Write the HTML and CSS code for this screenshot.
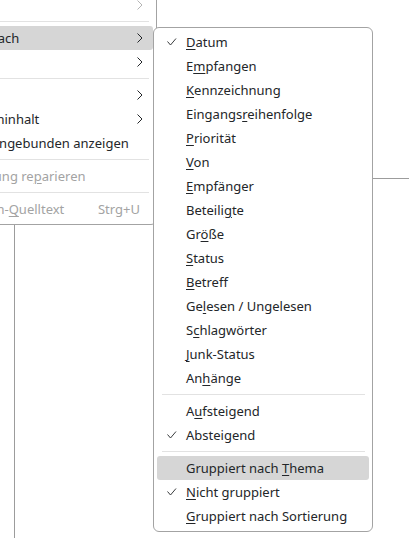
FILE: index.html
```html
<!DOCTYPE html>
<html lang="de">
<head>
<meta charset="UTF-8" />
<title>Ansicht</title>
<link rel="stylesheet" href="styles.css">
</head>
<body>

<div class="window">
  <div class="pane">
    <div class="pane-top"></div>
  </div>
</div>

<!-- Ansicht-Menü -->
<div class="menu menu-view">
  <div class="item disabled"><span class="label">Ordner</span><span class="arrow"><svg width="6" height="10" viewBox="0 0 6 10"><polyline points="0.5,0.5 5,5 0.5,9.5" /></svg></span></div>
  <div class="sep"></div>
  <div class="item active"><span class="label">Sortieren nach</span><span class="arrow"><svg width="6" height="10" viewBox="0 0 6 10"><polyline points="0.5,0.5 5,5 0.5,9.5" /></svg></span></div>
  <div class="item"><span class="label">Threads</span><span class="arrow"><svg width="6" height="10" viewBox="0 0 6 10"><polyline points="0.5,0.5 5,5 0.5,9.5" /></svg></span></div>
  <div class="sep"></div>
  <div class="item"><span class="label">Kopfzeilen</span><span class="arrow"><svg width="6" height="10" viewBox="0 0 6 10"><polyline points="0.5,0.5 5,5 0.5,9.5" /></svg></span></div>
  <div class="item"><span class="label">Nachrichteninhalt</span><span class="arrow"><svg width="6" height="10" viewBox="0 0 6 10"><polyline points="0.5,0.5 5,5 0.5,9.5" /></svg></span></div>
  <div class="item"><span class="label">Anhänge eingebunden anzeigen</span></div>
  <div class="sep"></div>
  <div class="item disabled"><span class="label">Textkodierung re<u>p</u>arieren</span></div>
  <div class="sep"></div>
  <div class="item disabled"><span class="label">Nachrichten-<u>Q</u>uelltext</span><span class="shortcut">Strg+U</span></div>
</div>

<!-- Untermenü "Sortieren nach" -->
<div class="menu menu-sort">
  <div class="item"><span class="mark"><svg width="10" height="8" viewBox="0 0 10 8"><polyline points="0.5,3.5 3.5,7 9,0.5" /></svg></span><span class="label"><u>D</u>atum</span></div>
  <div class="item"><span class="mark"></span><span class="label">E<u>m</u>pfangen</span></div>
  <div class="item"><span class="mark"></span><span class="label"><u>K</u>ennzeichnung</span></div>
  <div class="item"><span class="mark"></span><span class="label">Eingangs<u>r</u>eihenfolge</span></div>
  <div class="item"><span class="mark"></span><span class="label"><u>P</u>riorität</span></div>
  <div class="item"><span class="mark"></span><span class="label"><u>V</u>on</span></div>
  <div class="item"><span class="mark"></span><span class="label"><u>E</u>mpfänger</span></div>
  <div class="item"><span class="mark"></span><span class="label">Beteili<u>g</u>te</span></div>
  <div class="item"><span class="mark"></span><span class="label">Gr<u>ö</u>ße</span></div>
  <div class="item"><span class="mark"></span><span class="label"><u>S</u>tatus</span></div>
  <div class="item"><span class="mark"></span><span class="label"><u>B</u>etreff</span></div>
  <div class="item"><span class="mark"></span><span class="label">Ge<u>l</u>esen / Ungelesen</span></div>
  <div class="item"><span class="mark"></span><span class="label">S<u>c</u>hlagwörter</span></div>
  <div class="item"><span class="mark"></span><span class="label"><u>J</u>unk-Status</span></div>
  <div class="item"><span class="mark"></span><span class="label">An<u>h</u>änge</span></div>
  <div class="sep"></div>
  <div class="item"><span class="mark"></span><span class="label">A<u>u</u>fsteigend</span></div>
  <div class="item"><span class="mark"><svg width="10" height="8" viewBox="0 0 10 8"><polyline points="0.5,3.5 3.5,7 9,0.5" /></svg></span><span class="label">Absteigend</span></div>
  <div class="sep"></div>
  <div class="item active"><span class="mark"></span><span class="label">Gruppiert nach <u>T</u>hema</span></div>
  <div class="item"><span class="mark"><svg width="10" height="8" viewBox="0 0 10 8"><polyline points="0.5,3.5 3.5,7 9,0.5" /></svg></span><span class="label"><u>N</u>icht gruppiert</span></div>
  <div class="item"><span class="mark"></span><span class="label"><u>G</u>ruppiert nach Sortierung</span></div>
</div>

</body>
</html>
```

FILE: styles.css
```css
body { margin: 0; font-family: "Noto Sans", sans-serif; font-size: 13px; color: #232629; background: #fff; overflow: hidden; }

/* Fensterinhalt hinter den Menüs */
.window { height: 538px; padding-left: 14px; box-sizing: border-box; }
.pane { height: 100%; border-left: 1px solid #9c9c9c; }
.pane-top { height: 178px; border-bottom: 1px solid #9c9c9c; }

/* Menüs */
.menu { position: absolute; box-sizing: border-box; background: #fff; border: 1px solid #a3a3a3; border-radius: 6px; }
.menu-view { left: -130px; top: -11px; width: 287px; padding: 3px 0; }
.menu-sort { left: 153px; top: 27px; width: 220px; padding: 2px 0 3px; }

.item { height: 24px; margin: 0 3px; border-radius: 3px; display: flex; align-items: center; white-space: nowrap; }
.item.active { background: #d6d6d6; }
.item.disabled { color: #a3a3a3; }
.item .label { flex: 1; }
.item u { text-decoration-thickness: 1px; text-underline-offset: 2px; }

.menu-view .item { padding-left: 56px; }
.arrow { width: 6px; height: 10px; margin-right: 10px; display: flex; }
.arrow polyline { fill: none; stroke: #232629; stroke-width: 1; }
.disabled .arrow polyline { stroke: #b4b4b4; }
.shortcut { margin-right: 13px; }

.mark { width: 29px; flex: none; box-sizing: border-box; padding-left: 10px; display: flex; align-items: center; }
.mark polyline { fill: none; stroke: #3a3c3e; stroke-width: 1; }

.sep { height: 9px; display: flex; align-items: center; margin: 0 7px 0 8px; }
.sep::before { content: ""; flex: 1; height: 1px; background: #e2e2e2; }
```
